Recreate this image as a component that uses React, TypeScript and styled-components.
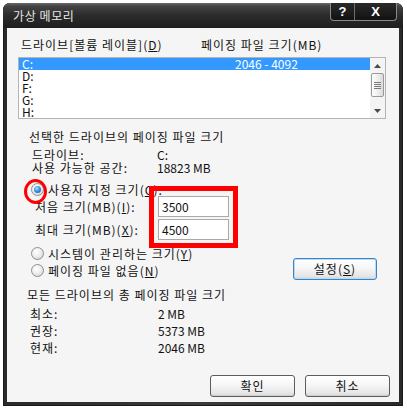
import React from 'react';
import styled, { createGlobalStyle } from 'styled-components';

const GlobalStyle = createGlobalStyle`
  html, body {
    margin: 0;
    padding: 0;
    background: #ffffff;
  }
  body {
    font-family: "Noto Sans CJK KR", sans-serif;
    font-size: 12px;
    color: #000000;
  }
`;

const Window = styled.div`
  width: 400px;
  height: 403px;
  margin: 3px 0 0 3px;
  display: flex;
  flex-direction: column;
  background: linear-gradient(90deg, #2a2a2a, #3a3a3a 50%, #2a2a2a);
  border-radius: 7px 7px 0 0;
  box-shadow: inset 0 0 0 1px #1a1a1a;
`;

const TitleBar = styled.div`
  height: 25px;
  flex: none;
  display: flex;
  align-items: flex-start;
  border-radius: 7px 7px 0 0;
  background: linear-gradient(#6a6a6a 0px, #444444 3px, #2c2c2c 12px, #1f1f1f 24px);
`;

const Title = styled.div`
  margin: 6px 0 0 10px;
  height: 13px;
  line-height: 13px;
  color: #e6e6e6;
  font-size: 12px;
  letter-spacing: 0.6px;
`;

const CaptionButtons = styled.div`
  margin-left: auto;
  margin-right: 6px;
  height: 17px;
  display: flex;
  border: 1px solid #8a8a8a;
  border-top: none;
  border-radius: 0 0 4px 4px;
  background: linear-gradient(#2a2a2a, #111111);
  overflow: hidden;
`;

const CaptionButton = styled.div<{ $w: number }>`
  width: ${p => p.$w}px;
  display: flex;
  align-items: center;
  justify-content: center;
  font-family: "Liberation Sans", sans-serif;
  font-weight: bold;
  font-size: 13px;
  color: #ffffff;
  & + & {
    border-left: 1px solid #6e6e6e;
  }
`;

const Client = styled.div`
  flex: 1;
  margin: 0 4px 4px;
  padding-left: 11px;
  display: flex;
  flex-direction: column;
  background: #f5f5f5;
  letter-spacing: 1px;
  color: #111111;
`;

const Value = styled.span`
  letter-spacing: 0;
`;

const ColumnHeader = styled.div`
  margin: 11px 0 0 3px;
  height: 12px;
  line-height: 12px;
  display: grid;
  grid-template-columns: 180px auto;
`;

const ListBox = styled.div`
  margin-top: 6px;
  width: 368px;
  height: 62px;
  box-sizing: border-box;
  border: 1px solid #b4b4b4;
  background: #ffffff;
  display: flex;
`;

const ListRows = styled.div`
  flex: 1;
  display: flex;
  flex-direction: column;
`;

const ListRow = styled.div<{ $selected?: boolean }>`
  height: 12px;
  line-height: 12px;
  padding-left: 3px;
  display: grid;
  grid-template-columns: 213px auto;
  letter-spacing: 0;
  background: ${p => (p.$selected ? '#3399ff' : 'transparent')};
  color: ${p => (p.$selected ? '#ffffff' : '#111111')};
`;

const ScrollBar = styled.div`
  width: 15px;
  display: flex;
  flex-direction: column;
  align-items: center;
  background: #f4f4f4;
`;

const ArrowBox = styled.div`
  height: 15px;
  width: 100%;
  display: flex;
  align-items: center;
  justify-content: center;
`;

const Thumb = styled.div`
  width: 13px;
  height: 24px;
  box-sizing: border-box;
  border: 1px solid #9a9a9a;
  border-radius: 2px;
  background: linear-gradient(90deg, #ffffff, #ececec 60%, #dadada);
  display: flex;
  align-items: center;
  justify-content: center;
`;

const Grip = styled.div`
  width: 7px;
  height: 7px;
  background: repeating-linear-gradient(#7a7a7a 0 1px, transparent 1px 2px);
`;

const Spacer = styled.div`
  flex: 1;
`;

const SectionTitle = styled.div<{ $top: number; $left: number }>`
  margin: ${p => p.$top}px 0 0 ${p => p.$left}px;
  height: 12px;
  line-height: 12px;
`;

const InfoRow = styled.div<{ $top: number; $left: number; $col: number }>`
  margin: ${p => p.$top}px 0 0 ${p => p.$left}px;
  height: 12px;
  line-height: 12px;
  display: grid;
  grid-template-columns: ${p => p.$col}px auto;
`;

const RadioRow = styled.div`
  position: relative;
  height: 13px;
  line-height: 13px;
  display: flex;
  align-items: center;
  gap: 4px;
`;

const FirstRadioRow = styled(RadioRow)`
  margin: 9px 0 0 13px;
`;

const RadioCircle = styled.span<{ $checked?: boolean }>`
  position: relative;
  width: 13px;
  height: 13px;
  flex: none;
  box-sizing: border-box;
  border-radius: 50%;
  border: 1px solid #8f8f8f;
  background: radial-gradient(circle at 40% 35%, #ffffff 0%, #ececec 50%, #c8c8c8 100%);
  &::after {
    content: '';
    display: ${p => (p.$checked ? 'block' : 'none')};
    position: absolute;
    left: 2px;
    top: 2px;
    width: 7px;
    height: 7px;
    border-radius: 50%;
    background: radial-gradient(circle at 40% 35%, #b9e2ff 0%, #3a95dd 45%, #0d4f8f 100%);
  }
`;

const RedCircle = styled.span`
  position: absolute;
  left: -7px;
  top: -4px;
  width: 23px;
  height: 25px;
  box-sizing: border-box;
  border: 3px solid #ff0000;
  border-radius: 50%;
  pointer-events: none;
`;

const SizeBlock = styled.div`
  margin-left: 17px;
  display: grid;
  grid-template-columns: 123px 71px;
  row-gap: 2px;
  align-items: center;
`;

const SizeInputs = styled.div`
  position: relative;
  grid-column: 2;
  grid-row: 1 / span 2;
  display: flex;
  flex-direction: column;
  gap: 2px;
`;

const TextField = styled.div`
  height: 21px;
  box-sizing: border-box;
  border: 1px solid #a9a9a9;
  background: #ffffff;
  padding-left: 3px;
  line-height: 19px;
  letter-spacing: 0;
`;

const RedBox = styled.div`
  position: absolute;
  left: -9px;
  top: -10px;
  width: 89px;
  height: 62px;
  box-sizing: border-box;
  border: 5px solid #ff0000;
  pointer-events: none;
`;

const SizeLabel = styled.div<{ $row: number }>`
  grid-column: 1;
  grid-row: ${p => p.$row};
  height: 21px;
  line-height: 21px;
`;

const OptionsRow = styled.div`
  margin-top: 7px;
  display: flex;
  align-items: flex-end;
`;

const OptionsColumn = styled.div`
  margin-left: 13px;
  padding-bottom: 3px;
  display: flex;
  flex-direction: column;
  gap: 4px;
`;

const PushButton = styled.button<{ $focus?: boolean; $w: number }>`
  width: ${p => p.$w}px;
  height: 22px;
  box-sizing: border-box;
  padding: 0 0 1px;
  font: inherit;
  letter-spacing: 1px;
  color: #111111;
  border: 1px solid ${p => (p.$focus ? '#3b83c6' : '#5c5c5c')};
  border-radius: 3px;
  background: linear-gradient(#ffffff, #f6f6f6 45%, #e6e6e6 85%, #d6d6d6);
  box-shadow: ${p => (p.$focus ? 'inset 0 0 0 1px #b3dcf7' : 'inset 0 -1px 0 #d0d0d0')};
`;

const SetButton = styled(PushButton)`
  margin: 0 22px 0 auto;
`;

const StatList = styled.div`
  margin: 6px 0 0 12px;
  display: flex;
  flex-direction: column;
  gap: 4px;
`;

const StatRow = styled.div`
  height: 13px;
  line-height: 13px;
  display: grid;
  grid-template-columns: 128px auto;
`;

const Footer = styled.div`
  margin: auto 9px 5px 0;
  display: flex;
  justify-content: flex-end;
  gap: 10px;
`;

const Key = styled.u`
  text-decoration: underline;
  text-underline-offset: 1px;
`;

const drives = [
  { name: 'C:', size: '2046 - 4092' },
  { name: 'D:', size: '' },
  { name: 'F:', size: '' },
  { name: 'G:', size: '' },
  { name: 'H:', size: '' },
];

const stats = [
  { label: '최소:', value: '2 MB' },
  { label: '권장:', value: '5373 MB' },
  { label: '현재:', value: '2046 MB' },
];

const Arrow = ({ up }: { up?: boolean }) => (
  <svg width="7" height="4" viewBox="0 0 7 4">
    <path d={up ? 'M0 4 L3.5 0 L7 4 Z' : 'M0 0 L7 0 L3.5 4 Z'} fill="#4a4a4a" />
  </svg>
);

export default function App() {
  return (
    <>
      <GlobalStyle />
      <Window>
        <TitleBar>
          <Title>가상 메모리</Title>
          <CaptionButtons>
            <CaptionButton $w={23}>?</CaptionButton>
            <CaptionButton $w={41}>X</CaptionButton>
          </CaptionButtons>
        </TitleBar>
        <Client>
          <ColumnHeader>
            <span>
              드라이브[볼륨 레이블](<Key>D</Key>)
            </span>
            <span>페이징 파일 크기(MB)</span>
          </ColumnHeader>
          <ListBox>
            <ListRows>
              {drives.map((d, i) => (
                <ListRow key={d.name} $selected={i === 0}>
                  <span>{d.name}</span>
                  <span>{d.size}</span>
                </ListRow>
              ))}
            </ListRows>
            <ScrollBar>
              <ArrowBox>
                <Arrow up />
              </ArrowBox>
              <Thumb>
                <Grip />
              </Thumb>
              <Spacer />
              <ArrowBox>
                <Arrow />
              </ArrowBox>
            </ScrollBar>
          </ListBox>

          <SectionTitle $top={12} $left={11}>
            선택한 드라이브의 페이징 파일 크기
          </SectionTitle>
          <InfoRow $top={6} $left={14} $col={125}>
            <span>드라이브:</span>
            <Value>C:</Value>
          </InfoRow>
          <InfoRow $top={1} $left={14} $col={125}>
            <span>사용 가능한 공간:</span>
            <Value>18823 MB</Value>
          </InfoRow>

          <FirstRadioRow>
            <RadioCircle $checked />
            <span>
              사용자 지정 크기(<Key>C</Key>):
            </span>
            <RedCircle />
          </FirstRadioRow>
          <SizeBlock>
            <SizeLabel $row={1}>
              처음 크기(MB)(<Key>I</Key>):
            </SizeLabel>
            <SizeLabel $row={2}>
              최대 크기(MB)(<Key>X</Key>):
            </SizeLabel>
            <SizeInputs>
              <TextField>3500</TextField>
              <TextField>4500</TextField>
              <RedBox />
            </SizeInputs>
          </SizeBlock>

          <OptionsRow>
            <OptionsColumn>
              <RadioRow>
                <RadioCircle />
                <span>
                  시스템이 관리하는 크기(<Key>Y</Key>)
                </span>
              </RadioRow>
              <RadioRow>
                <RadioCircle />
                <span>
                  페이징 파일 없음(<Key>N</Key>)
                </span>
              </RadioRow>
            </OptionsColumn>
            <SetButton $focus $w={84}>
              설정(<Key>S</Key>)
            </SetButton>
          </OptionsRow>

          <SectionTitle $top={9} $left={9}>
            모든 드라이브의 총 페이징 파일 크기
          </SectionTitle>
          <StatList>
            {stats.map(s => (
              <StatRow key={s.label}>
                <span>{s.label}</span>
                <Value>{s.value}</Value>
              </StatRow>
            ))}
          </StatList>

          <Footer>
            <PushButton $w={85}>확인</PushButton>
            <PushButton $w={85}>취소</PushButton>
          </Footer>
        </Client>
      </Window>
    </>
  );
}
